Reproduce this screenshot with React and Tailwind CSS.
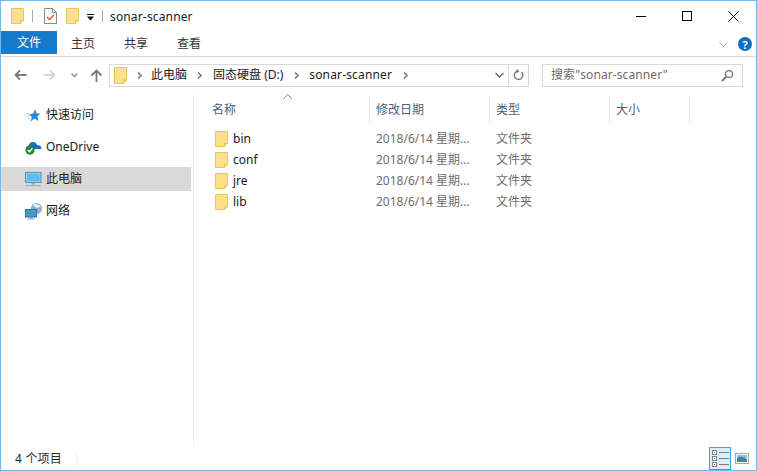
import React from "react";

const font = "font-['Noto_Sans','Noto_Sans_CJK_SC',sans-serif]";

function Folder({ w = 13, h = 16 }) {
  return (
    <svg width={w} height={h} viewBox="0 0 13 16" preserveAspectRatio="none" className="shrink-0 block">
      <path d="M0.5 0.5H12.5V12.5H9.5V15.5H0.5Z" fill="#fde08a" stroke="#eac55a" />
      <path d="M9.5 15.5V12.5H12.5Z" fill="#fdf0c0" stroke="#eac55a" />
    </svg>
  );
}

function Sep() {
  return <div className="w-px h-[12px] bg-[#a8a8a8] shrink-0" />;
}

function Crumb() {
  return (
    <svg width="5" height="7" viewBox="0 0 5 7" className="shrink-0">
      <path d="M1 0.5L4 3.5L1 6.5" fill="none" stroke="#808080" strokeWidth="1.6" />
    </svg>
  );
}

function NavItem({ icon, label, active }) {
  return (
    <div className={`h-[24px] flex items-center pl-[24px] gap-[4px] w-[190px] text-[12px] text-[#1a1a1a] ${active ? "bg-[#d9d9d9]" : ""}`}>
      <span className="w-[17px] h-[16px] flex items-center justify-center shrink-0">{icon}</span>
      <span>{label}</span>
    </div>
  );
}

const StarIcon = (
  <svg width="15" height="15" viewBox="0 0 15 15">
    <path d="M9 1L10.6 5.4L14.5 5.6L11.4 8.4L12.4 13L8.6 10.6L4.6 13.5L5.8 9L3 6.4L7.2 5.6Z" fill="#2b88d8" />
    <path d="M0.5 5.5H3M0.5 8H3.5M1.5 10.5H4" stroke="#a8cdea" strokeWidth="1" />
  </svg>
);
const CloudIcon = (
  <svg width="17" height="15" viewBox="0 0 17 15">
    <path d="M3 7.5C3.5 4 5.5 2 8 2C10.4 2 11.6 3.4 12 5C14.4 4.9 16.5 6.2 16.5 9H6Z" fill="#1070c8" />
    <circle cx="5" cy="10" r="4.7" fill="#2a8a2f" />
    <path d="M2.8 10L4.5 11.8L7.4 8.4" fill="none" stroke="#fff" strokeWidth="1.4" />
  </svg>
);
const PcIcon = (
  <svg width="17" height="15" viewBox="0 0 17 15">
    <rect x="0.5" y="0.5" width="15.5" height="10" fill="#8fd3f5" stroke="#5f8fb0" />
    <rect x="2" y="2" width="12.5" height="7" fill="#5cbcec" />
    <rect x="6.5" y="11" width="3.5" height="1.5" fill="#9aa7b2" />
    <rect x="0.5" y="13" width="15.5" height="1.2" fill="#9db2c4" />
  </svg>
);
const NetIcon = (
  <svg width="17" height="17" viewBox="0 0 17 17">
    <circle cx="11.5" cy="5.5" r="5.5" fill="#8fb0cb" />
    <path d="M8 1.5C10 0.5 14 1 15.5 3.5C13 5.5 9.5 5 8 1.5Z" fill="#e8eff5" />
    <rect x="0.5" y="6.5" width="11" height="7.5" fill="#3f9ad6" stroke="#3c6f96" />
    <rect x="4.5" y="14" width="3" height="1.5" fill="#8fa0ad" />
    <rect x="2.5" y="15.5" width="7" height="1" fill="#8fa0ad" />
  </svg>
);

const rows = ["bin", "conf", "jre", "lib"];

function HeaderCell({ w, label, className = "" }) {
  return (
    <div className={`h-[28px] flex items-center border-r border-[#e5e5e5] text-[12px] text-[#4c607a] ${className}`} style={{ width: w }}>
      {label}
    </div>
  );
}

export default function App() {
  return (
    <div className={`${font} w-[757px] h-[471px] bg-white border border-[#6fb9ee] flex flex-col overflow-hidden`}>
      {/* title bar */}
      <div className="h-[30px] flex items-center shrink-0 relative">
        <div className="pl-[10px] flex items-center">
          <Folder />
          <div className="ml-[8px]"><Sep /></div>
          <svg width="13" height="16" viewBox="0 0 13 16" className="ml-[11px]">
            <path d="M0.5 0.5H8.5L12.5 4.5V15.5H0.5Z" fill="#fff" stroke="#8a8a8a" />
            <path d="M8.5 0.5V4.5H12.5" fill="none" stroke="#8a8a8a" />
            <path d="M3 9L5.5 11.5L10 7" fill="none" stroke="#e8572a" strokeWidth="1.5" />
          </svg>
          <div className="ml-[9px]"><Folder /></div>
          <svg width="7" height="7" viewBox="0 0 7 7" className="ml-[8px] mt-[3px]">
            <rect x="0" y="0" width="7" height="1" fill="#111" />
            <path d="M0 2.5H7L3.5 6.5Z" fill="#111" />
          </svg>
          <div className="ml-[8px]"><Sep /></div>
          <span className="ml-[7px] mt-[1px] text-[12px] text-[#1a1a1a] tracking-[0.15px]">sonar-scanner</span>
        </div>
        <div className="ml-auto flex items-center">
          <div className="w-[46px] h-[30px] flex items-center justify-center">
            <div className="w-[10px] h-px bg-black" />
          </div>
          <div className="w-[46px] h-[30px] flex items-center justify-center">
            <div className="w-[10px] h-[10px] border border-black" />
          </div>
          <div className="w-[46px] h-[30px] flex items-center justify-center">
            <svg width="11" height="11" viewBox="0 0 11 11">
              <path d="M0.5 0.5L10.5 10.5M10.5 0.5L0.5 10.5" stroke="#000" strokeWidth="1" />
            </svg>
          </div>
        </div>
      </div>

      {/* ribbon tabs */}
      <div className="h-[26px] flex shrink-0 border-b border-[#dadbdc] items-start">
        <div className="w-[56px] h-[23px] bg-[#1979ca] text-white text-[12px] flex items-center justify-center">文件</div>
        <div className="h-[23px] flex items-center text-[12px] text-[#333] pt-[2px]">
          <span className="ml-[14px]">主页</span>
          <span className="ml-[29px]">共享</span>
          <span className="ml-[29px]">查看</span>
        </div>
        <div className="ml-auto h-[26px] flex items-center pr-[4px]">
          <svg width="9" height="5" viewBox="0 0 9 5">
            <path d="M0.5 0.5L4.5 4.5L8.5 0.5" fill="none" stroke="#a5a5a5" />
          </svg>
          <div className="ml-[10px] w-[14px] h-[14px] rounded-full bg-[#0f6fc6] text-white text-[11px] font-bold flex items-center justify-center leading-none">?</div>
        </div>
      </div>

      {/* address row */}
      <div className="h-[38px] flex items-center shrink-0 pb-[2px]">
        <div className="w-[108px] flex items-center pl-[13px] shrink-0">
          <svg width="13" height="12" viewBox="0 0 13 12">
            <path d="M12.5 6H2M6 1.5L1.5 6L6 10.5" fill="none" stroke="#7a7a7a" strokeWidth="1.8" />
          </svg>
          <svg width="13" height="12" viewBox="0 0 13 12" className="ml-[16px]">
            <path d="M0.5 6H11M7 1.5L11.5 6L7 10.5" fill="none" stroke="#d5d5d5" strokeWidth="1.8" />
          </svg>
          <svg width="7" height="5" viewBox="0 0 7 5" className="ml-[15px]">
            <path d="M0.5 0.5L3.5 3.5L6.5 0.5" fill="none" stroke="#8a8a8a" strokeWidth="1.3" />
          </svg>
          <svg width="13" height="13" viewBox="0 0 13 13" className="ml-[12px]">
            <path d="M6.5 13V2M1.5 6.5L6.5 1.5L11.5 6.5" fill="none" stroke="#7a7a7a" strokeWidth="1.8" />
          </svg>
        </div>
        <div className="w-[420px] h-[23px] border border-[#d9d9d9] flex items-center shrink-0">
          <div className="ml-[4px]"><Folder w={13} h={17} /></div>
          <div className="ml-[10px]"><Crumb /></div>
          <span className="ml-[9px] text-[12px] text-[#1a1a1a]">此电脑</span>
          <div className="ml-[10px]"><Crumb /></div>
          <span className="ml-[11px] text-[12px] text-[#1a1a1a]">固态硬盘 (D:)</span>
          <div className="ml-[11px]"><Crumb /></div>
          <span className="ml-[10px] text-[12px] text-[#1a1a1a] tracking-[0.15px]">sonar-scanner</span>
          <div className="ml-[11px]"><Crumb /></div>
          <div className="ml-auto w-[19px] h-full flex items-center justify-center border-r border-[#d9d9d9]">
            <svg width="9" height="6" viewBox="0 0 9 6">
              <path d="M0.5 1L4.5 5L8.5 1" fill="none" stroke="#666" strokeWidth="1.4" />
            </svg>
          </div>
          <div className="w-[19px] h-full flex items-center justify-center">
            <svg width="11" height="12" viewBox="0 0 11 12">
              <path d="M8.5 3A4.3 4.3 0 1 1 4 2.2" fill="none" stroke="#7a7a7a" strokeWidth="1.4" />
              <path d="M3.5 0L6.5 2.2L3.5 4.5Z" fill="#7a7a7a" />
            </svg>
          </div>
        </div>
        <div className="ml-[13px] w-[201px] h-[23px] border border-[#d9d9d9] flex items-center pl-[8px] pr-[8px] shrink-0">
          <span className="text-[12px] text-[#6d6d6d] tracking-[0.1px]">搜索"sonar-scanner"</span>
          <svg width="13" height="13" viewBox="0 0 13 13" className="ml-auto">
            <circle cx="8" cy="5" r="3.6" fill="none" stroke="#7a7a7a" strokeWidth="1.5" />
            <path d="M5.5 7.5L1 12" stroke="#7a7a7a" strokeWidth="2" />
          </svg>
        </div>
      </div>

      {/* body */}
      <div className="flex-1 flex min-h-0">
        <div className="w-[193px] shrink-0 border-r border-[#f0f0f0] pt-[8px]">
          <NavItem icon={StarIcon} label="快速访问" />
          <div className="h-[8px]" />
          <NavItem icon={CloudIcon} label="OneDrive" />
          <div className="h-[8px]" />
          <NavItem icon={PcIcon} label="此电脑" active />
          <div className="h-[8px]" />
          <NavItem icon={NetIcon} label="网络" />
        </div>
        <div className="flex-1 min-w-0 relative">
          <svg width="9" height="5" viewBox="0 0 9 5" className="absolute left-[89px] top-[-1px]">
            <path d="M0.5 4.5L4.5 0.5L8.5 4.5" fill="none" stroke="#808080" />
          </svg>
          <div className="flex pl-[18px] pt-[1px]">
            <HeaderCell w={158} label="名称" />
            <HeaderCell w={120} label="修改日期" className="pl-[6px]" />
            <HeaderCell w={120} label="类型" className="pl-[6px]" />
            <HeaderCell w={80} label="大小" className="pl-[6px]" />
          </div>
          <div className="pt-[4px] pl-[21px]">
            {rows.map((r) => (
              <div key={r} className="h-[21px] flex items-center text-[12px]">
                <div className="w-[18px] shrink-0"><Folder w={13} h={16} /></div>
                <div className="w-[143px] text-[#1a1a1a]">{r}</div>
                <div className="w-[120px] text-[#6d6d6d]">2018/6/14 星期...</div>
                <div className="text-[#6d6d6d]">文件夹</div>
              </div>
            ))}
          </div>
        </div>
      </div>

      {/* status bar */}
      <div className="h-[23px] flex items-center shrink-0">
        <span className="ml-[14px] text-[12px] text-[#2b2b2b] tracking-[0.2px]">4 个项目</span>
        <div className="ml-[14px] w-px h-[15px] bg-[#efefef]" />
        <div className="ml-auto flex items-center pr-[7px]">
          <div className="w-[22px] h-[23px] bg-[#d8eefb] border border-[#3fa4dd] flex flex-col justify-center items-center gap-[1px]">
            {["#808080", "#808080", "#c0392b"].map((c, i) => (
              <div key={i} className="flex items-center gap-[2px]">
                <div className="w-[5px] h-[5px] border border-[#808080] bg-white flex items-center justify-center">
                  <div className="w-px h-px" style={{ backgroundColor: c }} />
                </div>
                <div className="w-[10px] h-px bg-[#808080]" />
              </div>
            ))}
          </div>
          <svg width="14" height="11" viewBox="0 0 14 11" className="ml-[4px]">
            <rect x="0.5" y="0.5" width="13" height="10" fill="#fff" stroke="#a5a5a5" />
            <rect x="2" y="2" width="10" height="3" fill="#7fc0ea" />
            <path d="M2 5L6 3.5L12 6V9H2Z" fill="#3d7fa8" />
            <rect x="2" y="7.5" width="10" height="1.5" fill="#4e8a5a" />
          </svg>
        </div>
      </div>
    </div>
  );
}
